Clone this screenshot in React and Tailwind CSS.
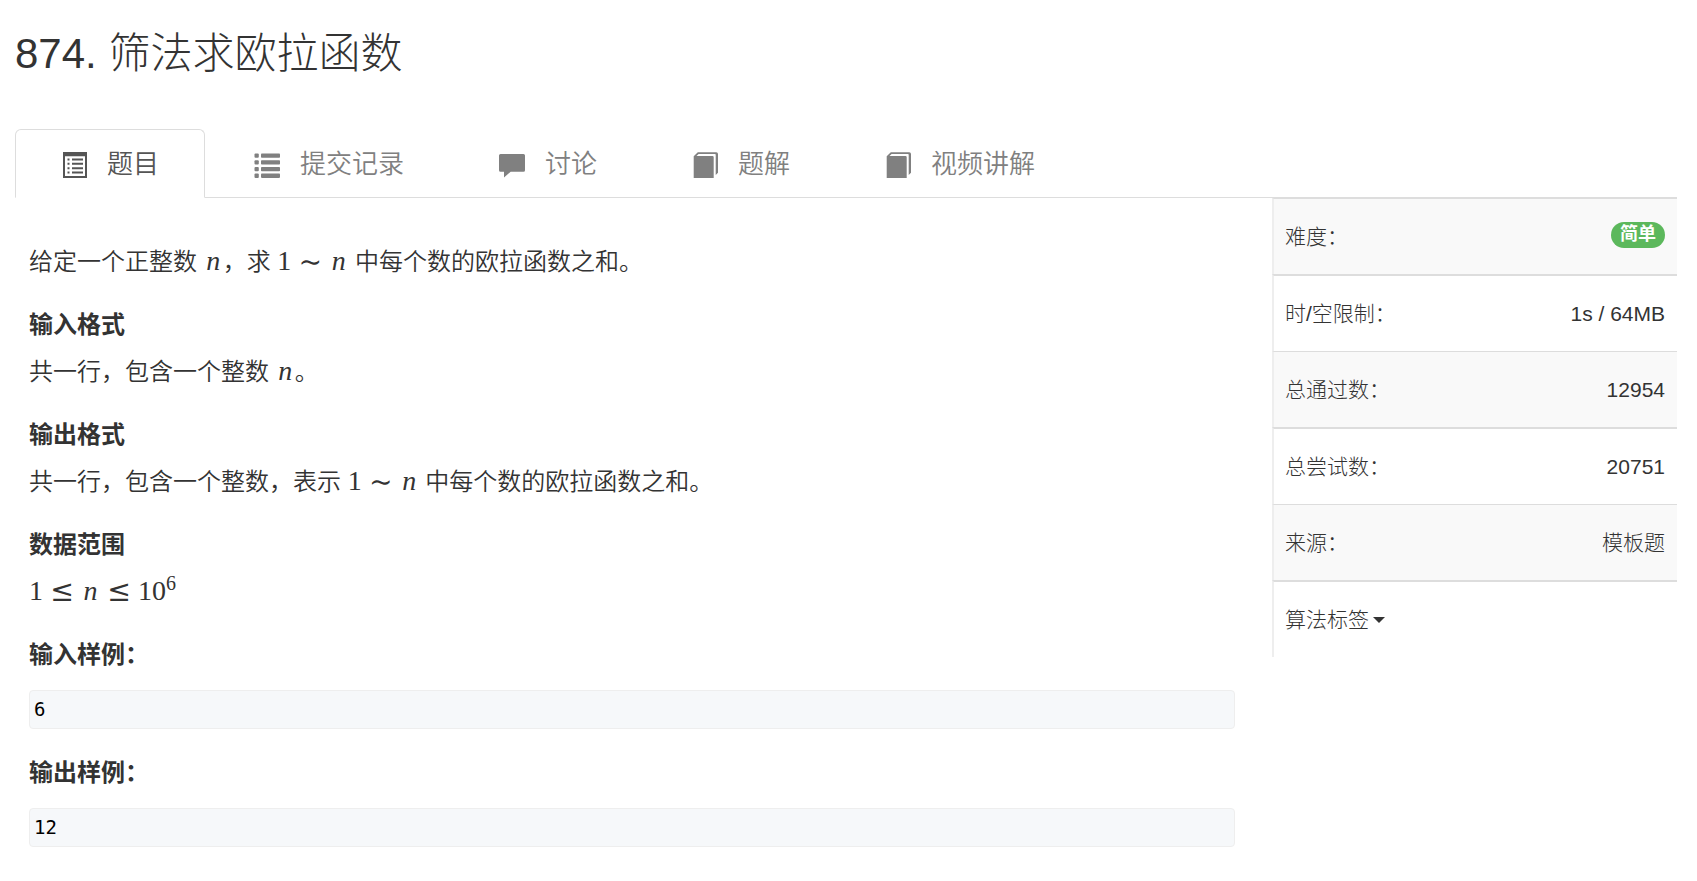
import React, { useState } from "react";
import clsx from "clsx";

// ── Icons ─────────────────────────────────────────────────────
const ListAltIcon = () => (
  <svg viewBox="0 0 26 28" className="w-[26px] h-7 shrink-0" fill="currentColor" aria-hidden="true">
    <path fillRule="evenodd" d="M2 2h24v26H2zM4 6.300v19.700h20V6.300z" />
    <path d="M6.500 8.500h2v2h-2zM11 8.500h11v2H11zM6.500 12.800h2v2h-2zM11 12.800h11v2H11zM6.500 17.200h2v2h-2zM11 17.200h11v2H11zM6.500 21.500h2v2h-2zM11 21.500h11v2H11z" />
  </svg>
);

const ListIcon = () => (
  <svg viewBox="0 0 26 28" className="w-[26px] h-7 shrink-0" fill="currentColor" aria-hidden="true">
    {[3.5, 10.2, 16.9, 23.6].map((y) => (
      <g key={y}>
        <rect x="0.500" y={y} width="4.300" height="4.300" rx="1" />
        <rect x="7" y={y} width="19" height="4.300" rx="0.800" />
      </g>
    ))}
  </svg>
);

const CommentIcon = () => (
  <svg viewBox="0 0 26 28" className="w-[26px] h-7 shrink-0" fill="currentColor" aria-hidden="true">
    <path d="M1.500 4h23A1.500 1.500 0 0 1 26 5.500v14.700a1.500 1.500 0 0 1-1.500 1.500H11.700L5 27.500v-5.800H1.500A1.500 1.500 0 0 1 0 20.200V5.500A1.500 1.500 0 0 1 1.500 4z" />
  </svg>
);

const BookIcon = () => (
  <svg viewBox="0 0 26 28" className="w-[26px] h-7 shrink-0" fill="currentColor" aria-hidden="true">
    <path d="M1.700 6.200L5.800 2.300H24.200Q26 2.300 26 4V22.800L23.700 25V4.700Q23.700 4 23 4H6.600L4.500 6H20.500Q21.700 6 21.700 7.200V28H1.700z" />
  </svg>
);

const TABS = [
  { id: "problem", label: "题目", Icon: ListAltIcon },
  { id: "submissions", label: "提交记录", Icon: ListIcon },
  { id: "discussion", label: "讨论", Icon: CommentIcon },
  { id: "solution", label: "题解", Icon: BookIcon },
  { id: "video", label: "视频讲解", Icon: BookIcon },
];

const INFO = [
  { label: "难度：", value: "简单", badge: true },
  { label: "时/空限制：", value: "1s / 64MB" },
  { label: "总通过数：", value: "12954" },
  { label: "总尝试数：", value: "20751" },
  { label: "来源：", value: "模板题" },
];

// ── Inline math ───────────────────────────────────────────────
const Math = ({ children }) => (
  <span className="font-['Liberation_Serif',serif] text-[28px] leading-none whitespace-nowrap">{children}</span>
);

const Var = ({ children }) => <i className="inline-block w-[19px] text-center">{children}</i>;

const Rel = ({ children }) => (
  <span className="inline-block w-[22px] mx-2 text-center font-['DejaVu_Math_TeX_Gyre','DejaVu_Serif',serif] leading-none h-6">{children}</span>
);

const Heading = ({ children }) => <h4 className="mb-[15px] font-bold">{children}</h4>;

const Paragraph = ({ children }) => <p className="mb-[31px] h-8">{children}</p>;

const Sample = ({ title, children }) => (
  <section className="mb-7">
    <h4 className="mb-[19px] font-bold">{title}</h4>
    <pre className="h-[39px] px-1 border border-[#eee] rounded bg-[#f6f8fa] text-black font-['DejaVu_Sans_Mono',monospace] text-[19px] leading-[37px]">
      <code className="font-['DejaVu_Sans_Mono',monospace]">{children}</code>
    </pre>
  </section>
);

export default function App() {
  const [active, setActive] = useState("problem");

  return (
    <div className="min-h-screen bg-white text-[#333] pl-[15px] pr-5 font-['Liberation_Sans','Noto_Sans_CJK_SC',sans-serif]">
      <h1 className="pt-[31px] mb-[52px] text-[42px] leading-[46px] font-light">874. 筛法求欧拉函数</h1>

      {/* Tabs */}
      <nav className="flex gap-[3px] border-b border-[#ddd]">
        {TABS.map(({ id, label, Icon }) => (
          <a
            key={id}
            href={`#${id}`}
            onClick={() => setActive(id)}
            className={clsx(
              "flex items-center gap-5 h-[69px] -mb-px px-[45px] border rounded-t-md text-[26px] leading-9 font-[350]",
              active === id ? "border-[#ddd] border-b-white bg-white text-[#555]" : "border-transparent text-[#808080]"
            )}
          >
            <Icon />
            {label}
          </a>
        ))}
      </nav>

      <div className="flex items-start">
        {/* Problem statement */}
        <main className="flex-1 min-w-0 pt-12 pl-3.5 pr-[37px] text-2xl leading-8 font-[350]">
          <Paragraph>
            给定一个正整数 <Math><Var>n</Var></Math>，求 <Math>1<Rel>∼</Rel><Var>n</Var></Math> 中每个数的欧拉函数之和。
          </Paragraph>

          <Heading>输入格式</Heading>
          <Paragraph>
            共一行，包含一个整数 <Math><Var>n</Var></Math>。
          </Paragraph>

          <Heading>输出格式</Heading>
          <Paragraph>
            共一行，包含一个整数，表示 <Math>1<Rel>∼</Rel><Var>n</Var></Math> 中每个数的欧拉函数之和。
          </Paragraph>

          <Heading>数据范围</Heading>
          <Paragraph>
            <Math>
              1<Rel>≤</Rel><Var>n</Var><Rel>≤</Rel>10<sup className="text-xl leading-none">6</sup>
            </Math>
          </Paragraph>

          <Sample title="输入样例：">6</Sample>
          <Sample title="输出样例：">12</Sample>
        </main>

        {/* Problem info */}
        <aside className="w-[405px] shrink-0 text-[21px] leading-[30px] font-light">
          <table className="w-full border-separate border-spacing-0">
            <tbody>
              {INFO.map((row) => (
                <tr key={row.label} className="group odd:bg-[#f9f9f9]">
                  <th scope="row" className="h-[76px] group-even:h-[77px] pl-[11px] border-l-2 border-t group-even:border-t-2 border-[#ddd] border-l-[#eee] text-left font-light">
                    {row.label}
                  </th>
                  <td className="pr-3 border-t group-even:border-t-2 border-[#ddd] text-right">
                    {row.badge ? (
                      <span className="inline-block h-[26px] px-[9px] mb-1 rounded-full bg-[#5cb85c] text-white text-lg leading-[25px] font-bold align-middle">
                        {row.value}
                      </span>
                    ) : (
                      row.value
                    )}
                  </td>
                </tr>
              ))}
              <tr>
                <td colSpan={2} className="h-[77px] pl-[11px] border-l-2 border-t-2 border-[#ddd] border-l-[#eee]">
                  <button type="button" className="flex items-center gap-1 cursor-pointer">
                    算法标签
                    <svg viewBox="0 0 12 6" className="w-3 h-1.5" fill="currentColor" aria-hidden="true">
                      <path d="M0 0h12L6 6z" />
                    </svg>
                  </button>
                </td>
              </tr>
            </tbody>
          </table>
        </aside>
      </div>
    </div>
  );
}
